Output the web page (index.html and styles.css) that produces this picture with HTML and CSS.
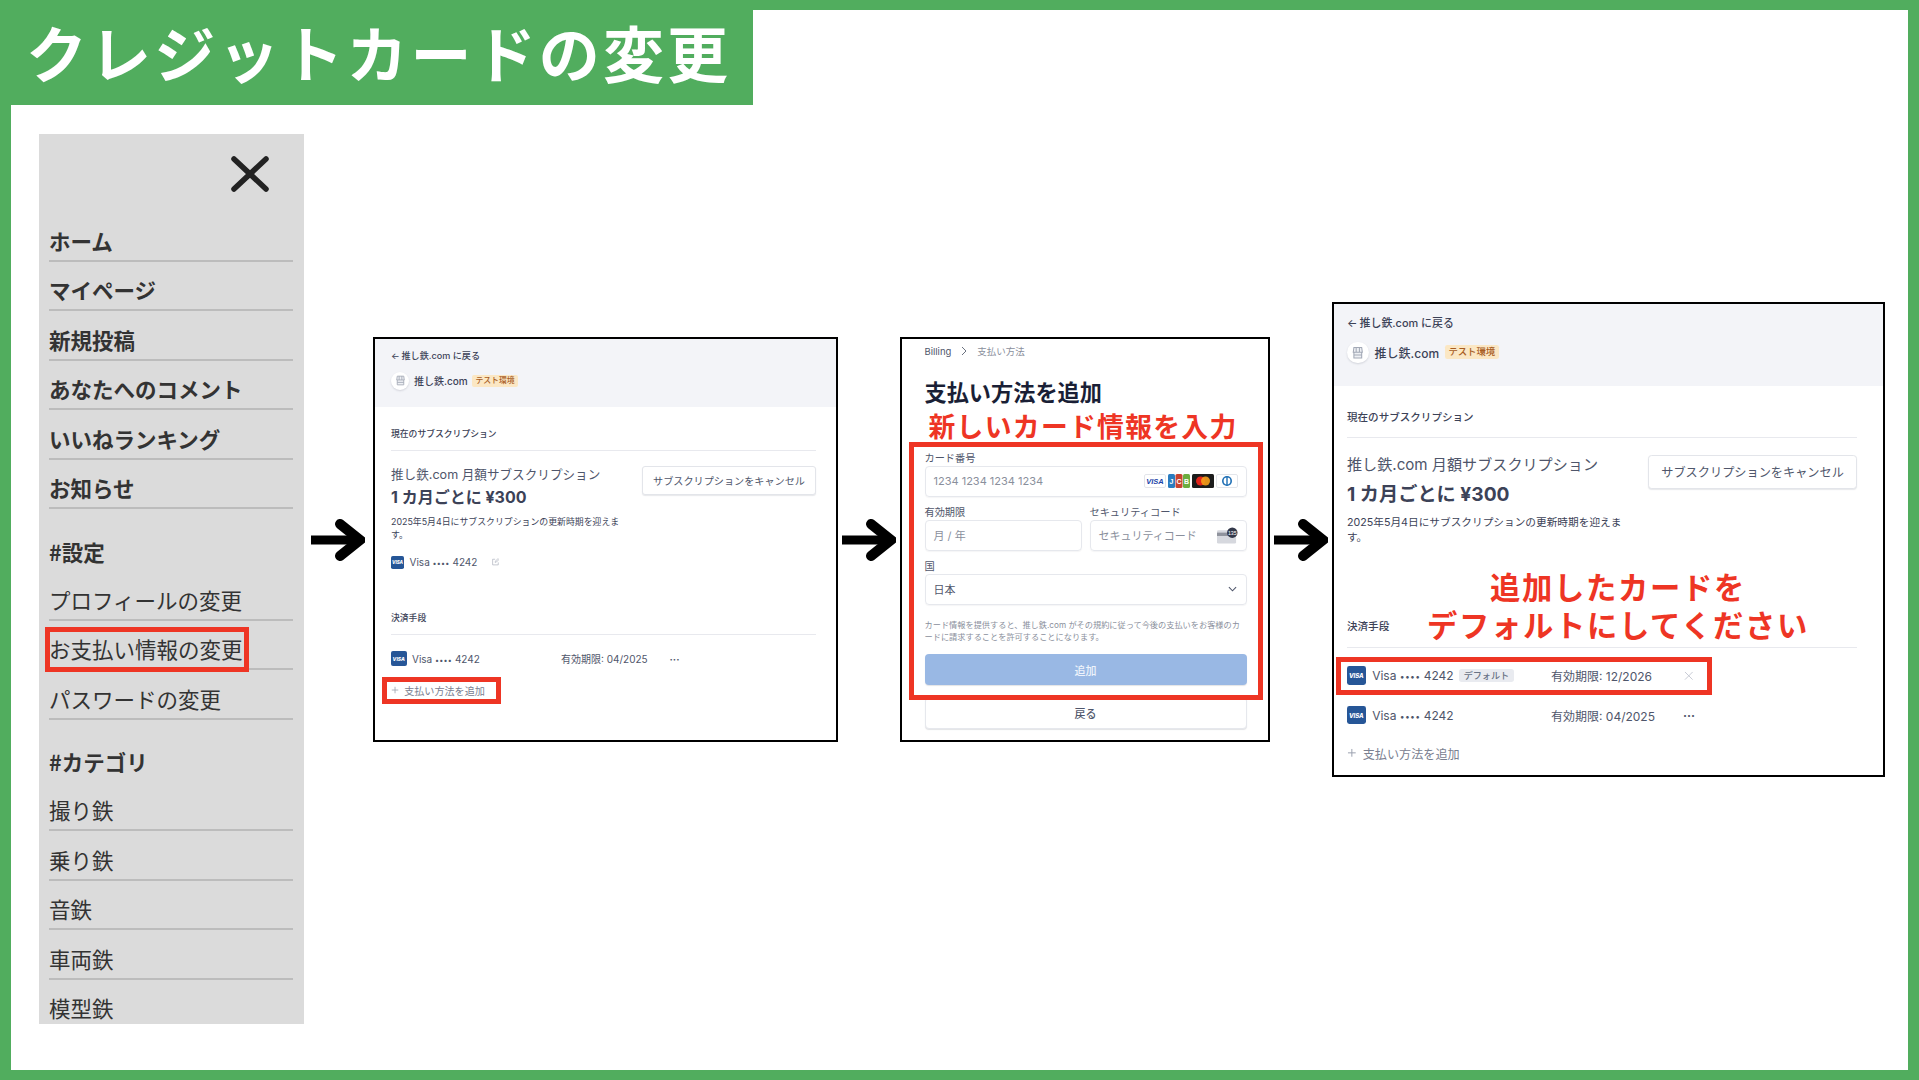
FILE: index.html
```html
<!DOCTYPE html>
<html lang="ja">
<head>
    <meta charset="UTF-8">
    <title>クレジットカードの変更</title>
    <link rel="stylesheet" href="styles.css">
</head>
<body>
    <div class="slide">
        <h1 class="banner">クレジットカードの変更</h1>
        <div class="content">
            <nav class="sidebar">
                <div class="close-row">
                    <svg class="close-icon" viewBox="0 0 38 36"><path d="M3 3 L35 33 M35 3 L3 33"/></svg>
                </div>
                <a class="nav-item strong">ホーム</a>
                <a class="nav-item strong">マイページ</a>
                <a class="nav-item strong">新規投稿</a>
                <a class="nav-item strong">あなたへのコメント</a>
                <a class="nav-item strong">いいねランキング</a>
                <a class="nav-item strong">お知らせ</a>
                <h2 class="nav-heading">#設定</h2>
                <a class="nav-item">プロフィールの変更</a>
                <a class="nav-item marked">お支払い情報の変更</a>
                <a class="nav-item">パスワードの変更</a>
                <h2 class="nav-heading">#カテゴリ</h2>
                <a class="nav-item">撮り鉄</a>
                <a class="nav-item">乗り鉄</a>
                <a class="nav-item">音鉄</a>
                <a class="nav-item">車両鉄</a>
                <a class="nav-item">模型鉄</a>
            </nav>

            <div class="flow">
                <svg class="arrow arrow-first" viewBox="0 0 54 42"><path class="shaft" d="M0 21 H48"/><path class="head" d="M29 5 L49 21 L29 37"/></svg>

                <section class="panel panel-small">
                    <header class="portal-head">
                        <div class="back"><span class="back-arrow">←</span>推し鉄.com に戻る</div>
                        <div class="brand">
                            <span class="brand-logo">
                                <svg viewBox="0 0 24 24"><path d="M6 4 H18 L19 11 H5 Z M9.500 4 V11 M14.500 4 V11 M6 11 V20 H18 V11 M6 15.500 H18"/></svg>
                            </span>
                            <span class="brand-name">推し鉄.com</span>
                            <span class="env-badge">テスト環境</span>
                        </div>
                    </header>
                    <div class="portal-body">
                        <div class="section-head"><span>現在のサブスクリプション</span></div>
                        <div class="sub-row">
                            <div class="sub-info">
                                <div class="sub-title">推し鉄.com 月額サブスクリプション</div>
                                <div class="sub-price">1 カ月ごとに ¥300</div>
                                <p class="sub-desc">2025年5月4日にサブスクリプションの更新時期を迎えます。</p>
                            </div>
                            <button class="cancel-btn">サブスクリプションをキャンセル</button>
                        </div>
                        <div class="sub-card">
                            <span class="visa visa-small">VISA</span>
                            <span class="card-name">Visa <span class="dots">••••</span> 4242</span>
                            <svg class="edit-icon" viewBox="0 0 12 12"><path d="M10 7 V11 H1 V2 H5 M5 7 L5.500 5 L9.500 1 L11 2.500 L7 6.500 Z"/></svg>
                        </div>
                        <div class="section-head section-pay"><span>決済手段</span></div>
                        <div class="card-row">
                            <div class="card-main">
                                <span class="visa">VISA</span>
                                <span class="card-name">Visa <span class="dots">••••</span> 4242</span>
                            </div>
                            <span class="expiry">有効期限: 04/2025</span>
                            <span class="card-action">···</span>
                        </div>
                        <div class="add-row marked">
                            <svg class="plus" viewBox="0 0 10 10"><path d="M5 1 V9 M1 5 H9"/></svg>
                            支払い方法を追加
                        </div>
                    </div>
                </section>

                <svg class="arrow" viewBox="0 0 54 42"><path class="shaft" d="M0 21 H48"/><path class="head" d="M29 5 L49 21 L29 37"/></svg>

                <section class="panel panel-form">
                    <div class="crumbs">
                        <span>Billing</span>
                        <svg class="crumb-sep" viewBox="0 0 8 10"><path d="M2 1 L6 5 L2 9"/></svg>
                        <span class="crumb-now">支払い方法</span>
                    </div>
                    <h2 class="form-title">支払い方法を追加</h2>
                    <div class="form-note">新しいカード情報を入力</div>
                    <div class="card-form">
                        <div class="field">
                            <label class="field-label">カード番号</label>
                            <div class="input">
                                <span class="placeholder">1234 1234 1234 1234</span>
                                <div class="brands">
                                    <svg class="brand-card" viewBox="0 0 22 14"><rect x=".5" y=".5" width="21" height="13" rx="1.500" fill="#fff" stroke="#e3e5ea"/><text x="11" y="10" text-anchor="middle" font-size="7.500" font-weight="700" font-style="italic" fill="#1a3fa8">VISA</text></svg>
                                    <svg class="brand-card" viewBox="0 0 22 14"><rect x="0" y="0" width="7" height="14" rx="1.500" fill="#2a7cc0"/><rect x="7.500" y="0" width="7" height="14" rx="1.500" fill="#c8432f"/><rect x="15" y="0" width="7" height="14" rx="1.500" fill="#6cad3f"/><text x="3.500" y="10" text-anchor="middle" font-size="7" font-weight="700" fill="#fff">J</text><text x="11" y="10" text-anchor="middle" font-size="7" font-weight="700" fill="#fff">C</text><text x="18.500" y="10" text-anchor="middle" font-size="7" font-weight="700" fill="#fff">B</text></svg>
                                    <svg class="brand-card" viewBox="0 0 22 14"><rect width="22" height="14" rx="1.500" fill="#1c1c1c"/><circle cx="8.500" cy="7" r="4.500" fill="#e2231a"/><circle cx="13.500" cy="7" r="4.500" fill="#f79e1b" opacity=".9"/></svg>
                                    <svg class="brand-card" viewBox="0 0 22 14"><rect x=".5" y=".5" width="21" height="13" rx="1.500" fill="#fff" stroke="#e3e5ea"/><circle cx="11" cy="7" r="5" fill="#1f6fb5"/><circle cx="11" cy="7" r="3.400" fill="#fff"/><rect x="10.300" y="2.500" width="1.400" height="9" fill="#1f6fb5"/></svg>
                                </div>
                            </div>
                        </div>
                        <div class="field-pair">
                            <div class="field">
                                <label class="field-label">有効期限</label>
                                <div class="input"><span class="placeholder">月 / 年</span></div>
                            </div>
                            <div class="field">
                                <label class="field-label">セキュリティコード</label>
                                <div class="input">
                                    <span class="placeholder">セキュリティコード</span>
                                    <svg class="cvc-icon" viewBox="0 0 22 17"><rect x="0" y="3" width="20" height="14" rx="1.500" fill="#d6d8de"/><rect x="0" y="5.500" width="20" height="3.500" fill="#8f939d"/><circle cx="16" cy="5.500" r="5.500" fill="#33384a"/><text x="16" y="7.500" text-anchor="middle" font-size="5.500" fill="#fff">135</text></svg>
                                </div>
                            </div>
                        </div>
                        <div class="field">
                            <label class="field-label">国</label>
                            <div class="input">
                                <span class="select-value">日本</span>
                                <svg class="select-chevron" viewBox="0 0 10 6"><path d="M1 1 L5 5 L9 1"/></svg>
                            </div>
                        </div>
                        <p class="terms">カード情報を提供すると、推し鉄.com がその規約に従って今後の支払いをお客様のカードに請求することを許可することになります。</p>
                        <button class="submit-btn">追加</button>
                    </div>
                    <button class="back-btn">戻る</button>
                </section>

                <svg class="arrow" viewBox="0 0 54 42"><path class="shaft" d="M0 21 H48"/><path class="head" d="M29 5 L49 21 L29 37"/></svg>

                <section class="panel panel-large">
                    <header class="portal-head">
                        <div class="back"><span class="back-arrow">←</span>推し鉄.com に戻る</div>
                        <div class="brand">
                            <span class="brand-logo">
                                <svg viewBox="0 0 24 24"><path d="M6 4 H18 L19 11 H5 Z M9.500 4 V11 M14.500 4 V11 M6 11 V20 H18 V11 M6 15.500 H18"/></svg>
                            </span>
                            <span class="brand-name">推し鉄.com</span>
                            <span class="env-badge">テスト環境</span>
                        </div>
                    </header>
                    <div class="portal-body">
                        <div class="section-head"><span>現在のサブスクリプション</span></div>
                        <div class="sub-row">
                            <div class="sub-info">
                                <div class="sub-title">推し鉄.com 月額サブスクリプション</div>
                                <div class="sub-price">1 カ月ごとに ¥300</div>
                                <p class="sub-desc">2025年5月4日にサブスクリプションの更新時期を迎えます。</p>
                            </div>
                            <button class="cancel-btn">サブスクリプションをキャンセル</button>
                        </div>
                        <div class="section-head section-pay"><span>決済手段</span></div>
                        <div class="card-row marked">
                            <div class="card-main">
                                <span class="visa">VISA</span>
                                <span class="card-name">Visa <span class="dots">••••</span> 4242</span>
                                <span class="default-badge">デフォルト</span>
                            </div>
                            <span class="expiry">有効期限: 12/2026</span>
                            <span class="card-action">
                                <svg class="remove-icon" viewBox="0 0 10 10"><path d="M1 1 L9 9 M9 1 L1 9"/></svg>
                            </span>
                        </div>
                        <div class="card-row">
                            <div class="card-main">
                                <span class="visa">VISA</span>
                                <span class="card-name">Visa <span class="dots">••••</span> 4242</span>
                            </div>
                            <span class="expiry">有効期限: 04/2025</span>
                            <span class="card-action">···</span>
                        </div>
                        <div class="add-row">
                            <svg class="plus" viewBox="0 0 10 10"><path d="M5 1 V9 M1 5 H9"/></svg>
                            支払い方法を追加
                        </div>
                    </div>
                    <div class="callout">追加したカードを<br>デフォルトにしてください</div>
                </section>
            </div>
        </div>
    </div>
</body>
</html>
```

FILE: styles.css
```css
body {
    margin: 0;
    background: #fff;
    font-family: Inter, "Noto Sans CJK JP", sans-serif;
    color: #333;
}

.slide {
    box-sizing: border-box;
    width: 1919px;
    height: 1080px;
    border: solid #51ad5e;
    border-width: 10px 11px;
    overflow: hidden;
}

.banner {
    box-sizing: border-box;
    width: 742px;
    height: 95px;
    margin: 0;
    padding-left: 15px;
    background: #51ad5e;
    color: #fff;
    font-family: "Noto Sans CJK JP", sans-serif;
    font-size: 61px;
    font-weight: 700;
    line-height: 83px;
    letter-spacing: 3.1px;
    white-space: nowrap;
}

.content {
    display: flex;
    align-items: flex-start;
    padding: 29px 0 0 28px;
}

/* sidebar */
.sidebar {
    box-sizing: border-box;
    flex: none;
    width: 265px;
    height: 890px;
    padding: 0 11px 0 10px;
    background: #dbdbdb;
    font-family: "Noto Sans CJK JP", sans-serif;
    overflow: hidden;
}

.close-row {
    display: flex;
    justify-content: flex-end;
    height: 78px;
    padding: 22px 24px 0 0;
    box-sizing: border-box;
}

.close-icon {
    width: 38px;
    height: 36px;
    fill: none;
    stroke: #222;
    stroke-width: 5.5;
    stroke-linecap: round;
}

.nav-item {
    box-sizing: border-box;
    position: relative;
    display: block;
    height: 49.5px;
    padding: 13.5px 0 0 0;
    border-bottom: 2px solid #bcbcbc;
    font-size: 21.5px;
    line-height: 30px;
    color: #333;
}

.nav-item.strong {
    font-weight: 700;
}

.nav-item.marked::after {
    content: "";
    position: absolute;
    left: -4px;
    top: 6px;
    width: 204px;
    height: 45px;
    box-sizing: border-box;
    border: 5px solid #ee3524;
}

.nav-heading {
    margin: 27.5px 0 4.5px;
    font-size: 21.5px;
    font-weight: 700;
    line-height: 30px;
    color: #333;
}

/* arrows and panels */
.flow {
    display: flex;
    align-items: center;
    height: 811px;
}

.arrow {
    flex: none;
    width: 54px;
    height: 42px;
    margin: 0 4px;
    fill: none;
    stroke: #000;
    stroke-width: 9;
}

.arrow-first {
    margin: 0 8px 0 7px;
}

.arrow .head {
    stroke-linecap: round;
    stroke-width: 10;
}

.panel {
    box-sizing: border-box;
    position: relative;
    flex: none;
    border: 2px solid #000;
    background: #fff;
    overflow: hidden;
}

.panel-small {
    width: 465px;
    height: 405px;
    font-size: 10px;
}

.panel-large {
    width: 553px;
    height: 475px;
    font-size: 12px;
}

.panel-form {
    width: 370px;
    height: 405px;
}

.portal-head {
    box-sizing: border-box;
    height: 6.8em;
    padding-top: 1em;
    background: #f3f4f8;
}

.panel-small .portal-head,
.panel-small .portal-body {
    padding-left: 16px;
    padding-right: 20px;
}

.panel-large .portal-head,
.panel-large .portal-body {
    padding-left: 13px;
    padding-right: 26px;
}

.panel-small .portal-head {
    padding-top: 1.1em;
}

.back {
    height: 1.3em;
    font-size: .91em;
    line-height: 1.3em;
    font-weight: 500;
    color: #3c4257;
}

.back-arrow {
    margin-right: .2em;
}

.brand {
    display: flex;
    align-items: center;
    margin-top: 1em;
}

.panel-large .brand {
    margin-top: .95em;
}

.brand-logo {
    display: flex;
    align-items: center;
    justify-content: center;
    width: 1.8em;
    height: 1.8em;
    border-radius: 50%;
    background: #fff;
    box-shadow: 0 1px 2px rgba(60, 66, 87, .18);
}

.brand-logo svg {
    width: 1.3em;
    height: 1.3em;
    fill: #eef0f4;
    stroke: #a3a9b6;
    stroke-width: 1.6;
}

.brand-name {
    margin-left: .5em;
    font-size: 1em;
    font-weight: 500;
    color: #3c4257;
}

.env-badge {
    margin-left: .6em;
    padding: 0 .4em;
    border-radius: .25em;
    background: #fbe7c4;
    color: #a85c1f;
    font-size: .78em;
    font-weight: 500;
    line-height: 1.5em;
}

.section-head {
    box-sizing: border-box;
    height: 2.4em;
    margin-top: 2em;
    border-bottom: 1px solid #e8e9ee;
}

.section-head span {
    display: block;
    font-size: .88em;
    font-weight: 500;
    line-height: 1.5em;
    color: #3c4257;
}

.section-pay {
    margin-top: 4.15em;
}

.panel-large .section-pay {
    margin-top: 6.1em;
}

.sub-row {
    display: flex;
    justify-content: space-between;
    align-items: flex-start;
    margin-top: 1.5em;
}

.sub-info {
    width: 23.2em;
}

.sub-title {
    height: 1.28em;
    font-size: 1.26em;
    line-height: 1.28em;
    color: #4f566b;
    white-space: nowrap;
}

.panel-small .sub-title {
    line-height: 1.4em;
}

.panel-large .sub-title {
    line-height: 1.2em;
}

.sub-price {
    font-size: 1.6em;
    font-weight: 700;
    line-height: 1.875em;
    color: #3c4257;
}

.sub-desc {
    margin: .28em 0 0;
    font-size: .89em;
    line-height: 1.46em;
    color: #3c4257;
}

.cancel-btn {
    flex: none;
    width: 17.15em;
    height: 2.85em;
    padding: 0;
    border: 1px solid #e3e5ea;
    border-radius: .3em;
    background: #fff;
    box-shadow: 0 1px 1px rgba(60, 66, 87, .12);
    font: inherit;
    font-size: 1.015em;
    color: #4f566b;
}

.panel-large .cancel-btn {
    margin-top: -.15em;
}

.sub-card {
    display: flex;
    align-items: center;
    height: 1.4em;
    margin-top: 1.45em;
}

.visa {
    display: inline-flex;
    align-items: center;
    justify-content: center;
    flex: none;
    width: 3.1em;
    height: 3.1em;
    border-radius: .4em;
    background: #265697;
    color: #fff;
    font-size: .5em;
    font-weight: 800;
    font-style: italic;
    overflow: hidden;
}

.visa-small {
    width: 2.9em;
    height: 2.9em;
    font-size: .45em;
}

.card-name {
    margin-left: .55em;
    color: #4f566b;
    white-space: nowrap;
}

.dots {
    font-size: .72em;
    letter-spacing: .03em;
}

.edit-icon {
    width: .75em;
    height: .75em;
    margin-left: 1.45em;
    fill: none;
    stroke: #a3a9b6;
    stroke-width: 1;
}

.card-row {
    position: relative;
    display: flex;
    align-items: center;
    height: 2em;
    margin-top: 1.4em;
    color: #4f566b;
}

.panel-large .card-row.marked {
    margin-top: 1.3em;
}

.panel-large .card-row.marked + .card-row {
    margin-top: 1.3em;
}

.card-row.marked::after {
    content: "";
    position: absolute;
    left: -11px;
    top: -6px;
    width: 376px;
    height: 38px;
    box-sizing: border-box;
    border: 5px solid #ee3524;
}

.card-main {
    display: flex;
    align-items: center;
    width: 17em;
}

.expiry {
    width: 8.3em;
    text-align: right;
    white-space: nowrap;
}

.panel-small .expiry {
    width: 8em;
}

.panel-small .card-action {
    width: 6.7em;
}

.card-action {
    display: flex;
    justify-content: center;
    align-items: center;
    width: 6.4em;
    font-weight: 700;
}

.remove-icon {
    width: .8em;
    height: .8em;
    fill: none;
    stroke: #c5c9d3;
    stroke-width: 1;
}

.default-badge {
    flex: none;
    margin-left: .6em;
    padding: 0 .5em;
    border-radius: .3em;
    background: #e9ebf0;
    color: #697386;
    font-size: .76em;
    font-weight: 500;
    line-height: 1.45em;
}

.add-row {
    position: relative;
    display: flex;
    align-items: center;
    gap: .5em;
    height: 2em;
    margin-top: 1.15em;
    font-size: 1.01em;
    color: #7a8090;
}

.plus {
    width: .8em;
    height: .8em;
    fill: none;
    stroke: #9aa0ae;
    stroke-width: 1;
}

.add-row.marked::after {
    content: "";
    position: absolute;
    left: -9px;
    top: -3px;
    width: 119px;
    height: 27px;
    box-sizing: border-box;
    border: 5px solid #ee3524;
}

.callout {
    position: absolute;
    left: 60px;
    top: 263px;
    width: 448px;
    color: #ee3524;
    font-family: "Noto Sans CJK JP", sans-serif;
    font-size: 30.3px;
    font-weight: 700;
    line-height: 38px;
    letter-spacing: 1.7px;
    text-align: center;
}

/* add card form */
.panel-form {
    padding: 0 21.5px 0 22.5px;
}

.crumbs {
    display: flex;
    align-items: center;
    height: 24px;
    font-size: 9.5px;
    color: #4f566b;
}

.crumb-sep {
    width: 8px;
    height: 10px;
    margin: 0 9px;
    fill: none;
    stroke: #6b7280;
    stroke-width: 1;
}

.crumb-now {
    color: #8a8f9c;
}

.form-title {
    margin: 15px 0 0;
    font-size: 22.2px;
    font-weight: 700;
    line-height: 30px;
    color: #1a1f36;
}

.form-note {
    margin: 1px 0 0 4px;
    color: #ee3524;
    font-family: "Noto Sans CJK JP", sans-serif;
    font-size: 26.8px;
    font-weight: 700;
    line-height: 34px;
    letter-spacing: 1.3px;
    white-space: nowrap;
}

.card-form {
    position: relative;
}

.card-form::after {
    content: "";
    position: absolute;
    left: -16px;
    top: -1px;
    width: 354px;
    height: 258px;
    box-sizing: border-box;
    border: 5px solid #ee3524;
}

.field {
    padding-top: 8px;
}

.field-label {
    display: block;
    height: 14px;
    margin-bottom: 1px;
    font-size: 10.2px;
    line-height: 14px;
    color: #4f566b;
}

.input {
    box-sizing: border-box;
    display: flex;
    align-items: center;
    justify-content: space-between;
    height: 31px;
    padding: 0 8px 1px 8px;
    border: 1px solid #e6e8ed;
    border-radius: 4px;
    box-shadow: 0 1px 1px rgba(60, 66, 87, .05);
    font-size: 11px;
}

.placeholder {
    color: #8a8f9c;
}

.brands {
    display: flex;
    gap: 2px;
}

.brand-card {
    display: block;
    width: 22px;
    height: 14px;
}

.brand-card text,
.cvc-icon text {
    font-family: "Liberation Sans", sans-serif;
}

.field-pair {
    display: grid;
    grid-template-columns: 1fr 1fr;
    gap: 8px;
}

.cvc-icon {
    width: 21px;
    height: 17px;
}

.select-value {
    color: #4f566b;
}

.select-chevron {
    width: 9px;
    height: 6px;
    margin-right: 1px;
    fill: none;
    stroke: #4f566b;
    stroke-width: 1.2;
}

.terms {
    margin: 14px 0 0;
    font-size: 8.2px;
    line-height: 12px;
    color: #8a8f9c;
    overflow-wrap: anywhere;
}

.submit-btn {
    display: block;
    width: 100%;
    height: 31px;
    margin-top: 11px;
    padding: 0;
    border: 0;
    border-radius: 4px;
    background: #99b8e4;
    box-shadow: 0 1px 1px rgba(60, 66, 87, .15);
    color: #eef3fb;
    font: inherit;
    font-size: 11px;
    font-weight: 500;
}

.back-btn {
    display: block;
    width: 100%;
    height: 32px;
    margin-top: 12px;
    padding: 0;
    border: 1px solid #e6e8ed;
    border-radius: 4px;
    background: #fff;
    box-shadow: 0 1px 1px rgba(60, 66, 87, .15);
    color: #4f566b;
    font: inherit;
    font-size: 11px;
    font-weight: 500;
}
```
